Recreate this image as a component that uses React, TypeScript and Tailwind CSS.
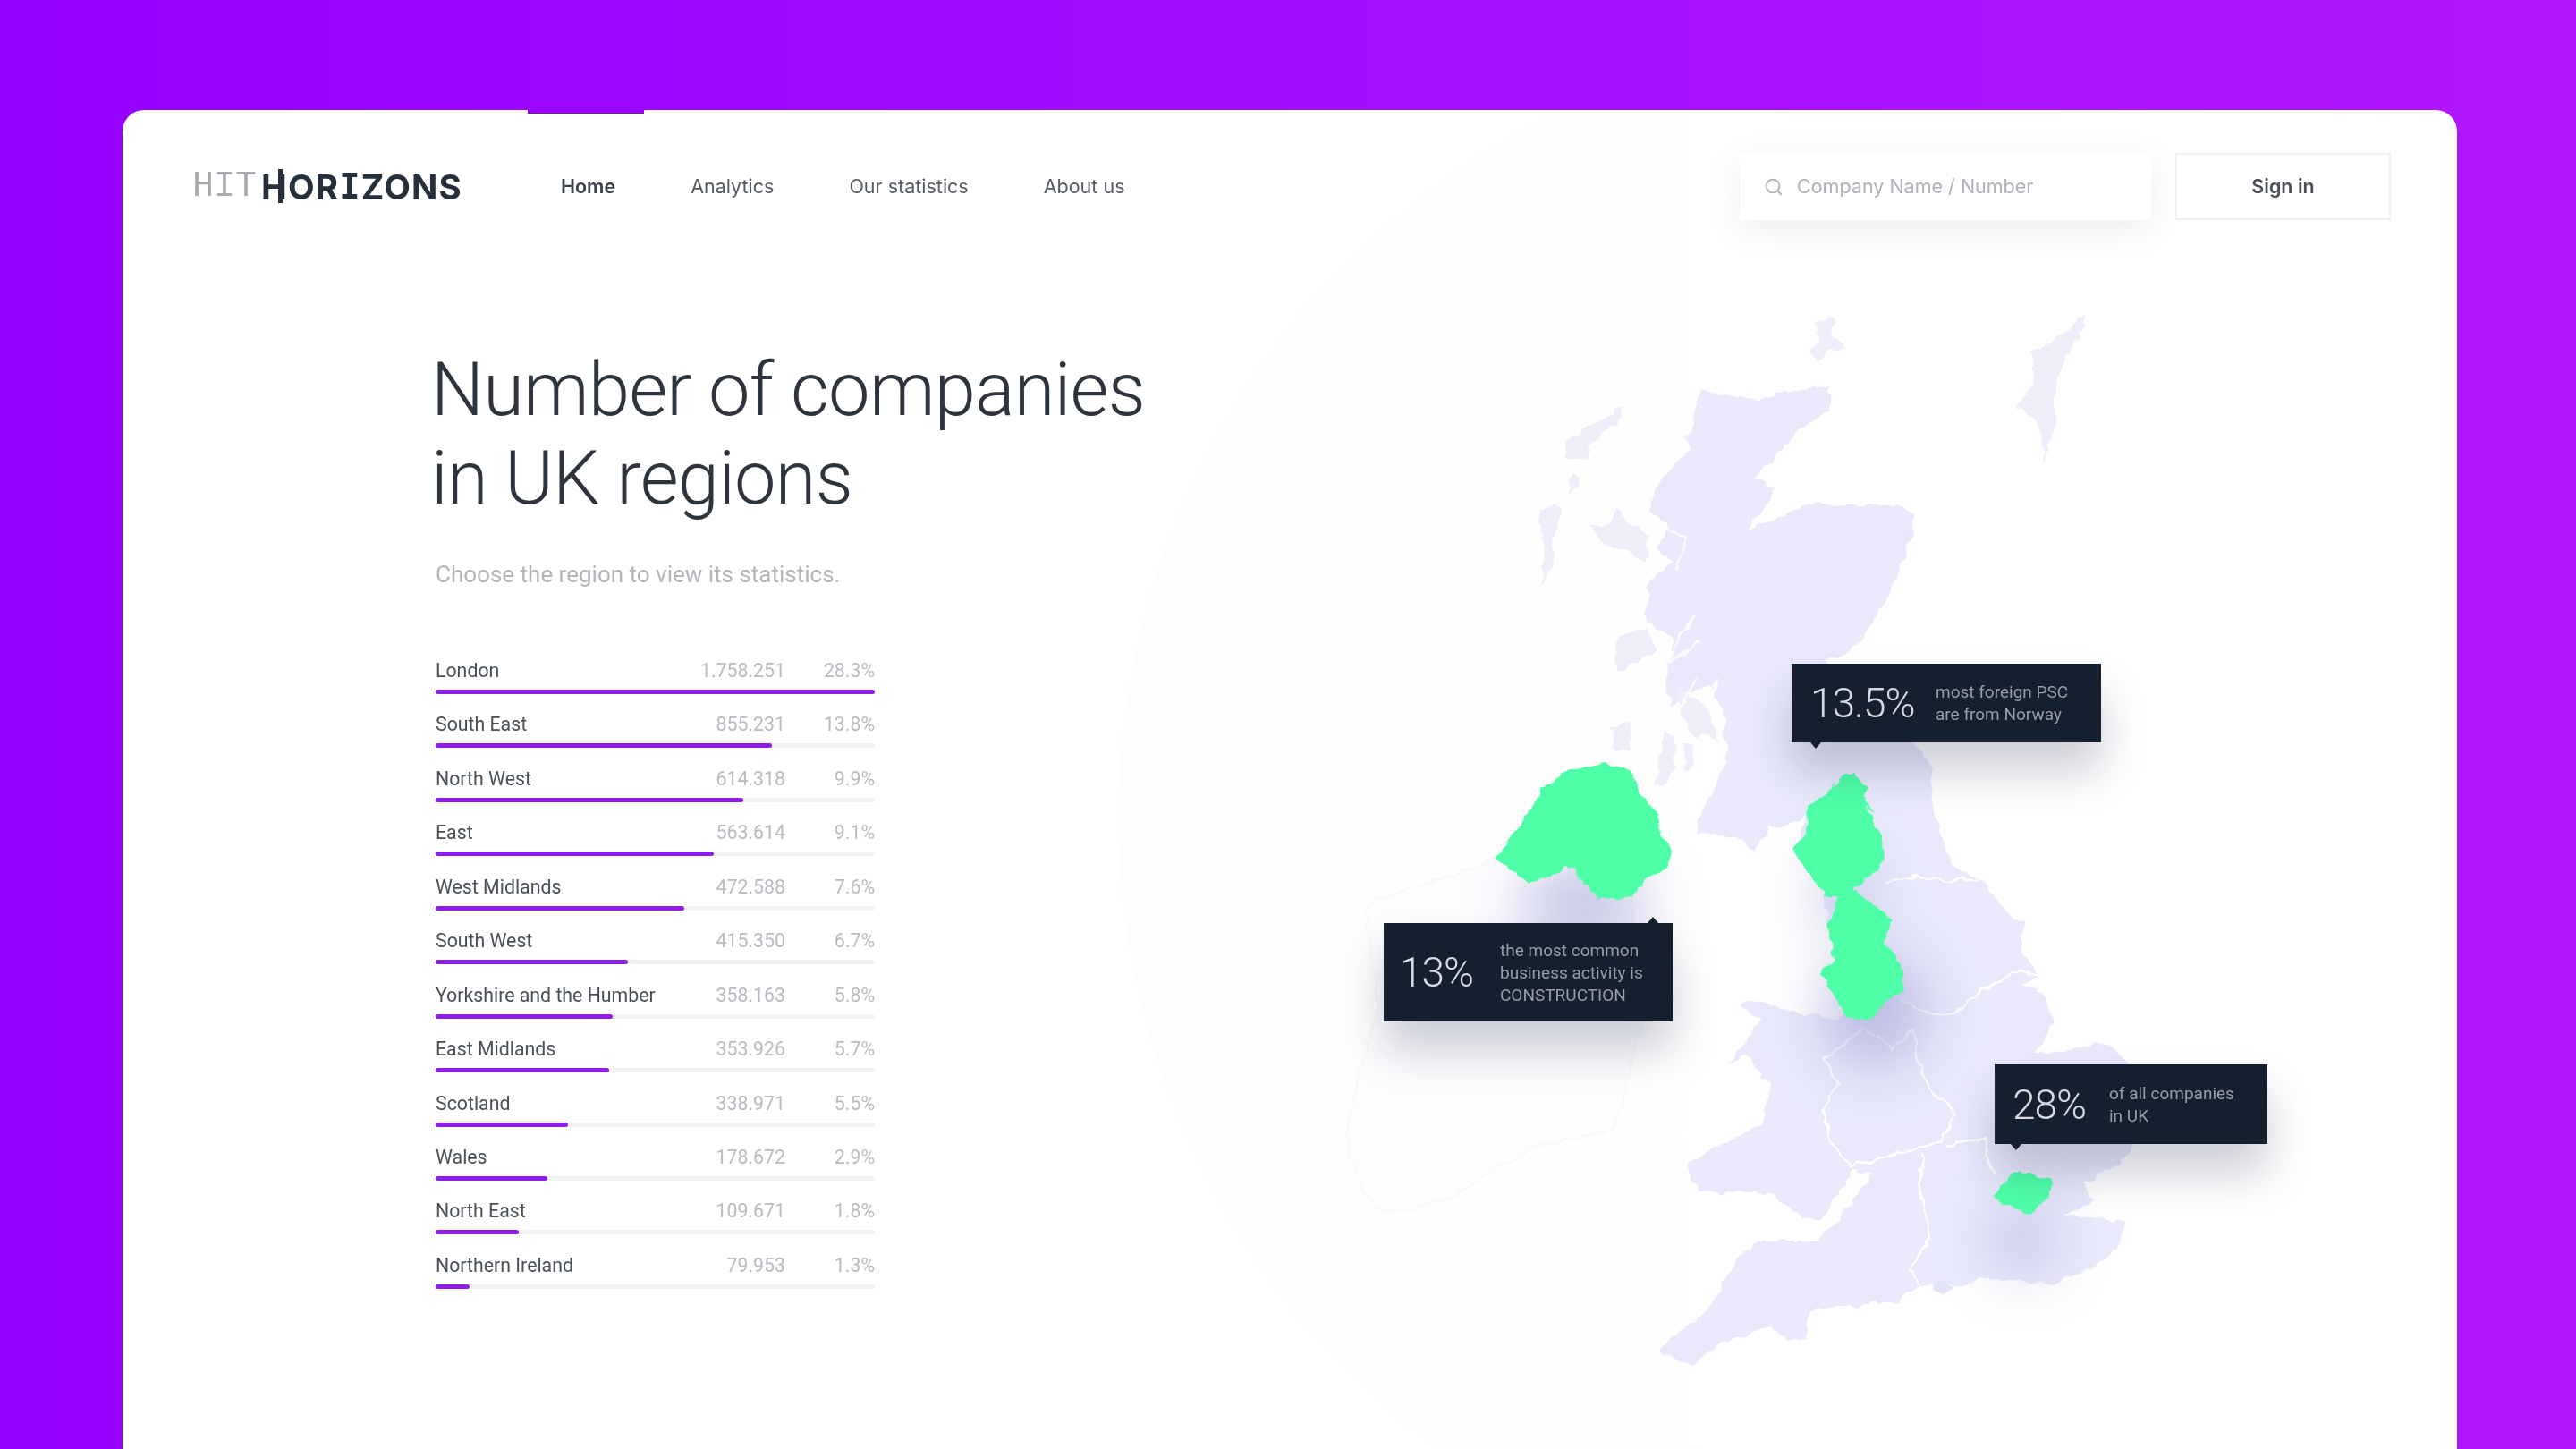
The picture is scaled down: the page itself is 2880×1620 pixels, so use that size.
import { Search } from 'lucide-react';

const regions = [
  { name: 'London', count: '1.758.251', pct: '28.3%', bar: 100 },
  { name: 'South East', count: '855.231', pct: '13.8%', bar: 76.5 },
  { name: 'North West', count: '614.318', pct: '9.9%', bar: 70 },
  { name: 'East', count: '563.614', pct: '9.1%', bar: 63.4 },
  { name: 'West Midlands', count: '472.588', pct: '7.6%', bar: 56.7 },
  { name: 'South West', count: '415.350', pct: '6.7%', bar: 43.7 },
  { name: 'Yorkshire and the Humber', count: '358.163', pct: '5.8%', bar: 40.3 },
  { name: 'East Midlands', count: '353.926', pct: '5.7%', bar: 39.5 },
  { name: 'Scotland', count: '338.971', pct: '5.5%', bar: 30.2 },
  { name: 'Wales', count: '178.672', pct: '2.9%', bar: 25.4 },
  { name: 'North East', count: '109.671', pct: '1.8%', bar: 19 },
  { name: 'Northern Ireland', count: '79.953', pct: '1.3%', bar: 7.8 },
];

// map coordinates are page pixels, the svg viewBox starts at the card corner
const mainland =
  '1900,436 1935,442 1954,448 1998,438 2046,432 2046,458 2005,486 1979,517 1960,537 1986,545 1979,561 1951,593 1998,573 2030,561 2062,565 2120,565 2139,573 2139,593 2123,636 2113,664 2088,703 2080,720 2040,740 2120,800 2139,832 2158,854 2160,900 2168,930 2185,969 2215,983 2238,1015 2261,1033 2261,1061 2280,1093 2262,1100 2284,1107 2296,1148 2276,1175 2315,1175 2340,1166 2361,1170 2384,1194 2392,1240 2384,1281 2368,1304 2330,1322 2341,1341 2307,1359 2376,1366 2368,1396 2338,1419 2292,1435 2215,1428 2185,1437 2143,1439 2131,1446 2123,1455 2062,1460 2024,1465 2016,1497 1997,1499 1978,1483 1924,1501 1890,1524 1856,1513 1863,1501 1909,1465 1940,1410 1970,1387 2032,1387 2055,1364 2093,1313 2070,1309 2039,1361 2016,1361 1978,1334 1940,1332 1901,1334 1886,1304 1909,1286 1970,1258 1978,1212 1955,1180 1928,1192 1947,1171 1970,1139 1945,1125 1955,1118 2001,1130 2055,1139 2062,1134 2051,1111 2035,1088 2051,1070 2043,1033 2039,1001 2005,950 2012,930 2020,914 1978,927 1960,950 1947,937 1909,932 1897,933 1900,913 1913,893 1930,853 1927,797 1913,767 1893,772 1870,790 1862,770 1865,739 1872,715 1850,700 1838,690 1845,665 1839,656 1871,628 1852,616 1865,589 1845,569 1849,553 1858,533 1890,502 1884,490 1896,466';

const islands = [
  '2330,351 2333,363 2317,387 2305,407 2298,434 2298,478 2285,519 2282,490 2273,466 2255,456 2260,446 2273,430 2273,395 2305,375',
  '2027,359 2053,355 2049,375 2065,389 2043,393 2033,405 2024,395 2034,379',
  '1814,454 1807,474 1775,498 1775,513 1750,513 1750,494 1782,474',
  '1769,537 1753,553 1758,530',
  '1807,565 1823,585 1845,600 1839,628 1820,616 1794,608 1778,589 1801,585',
  '1721,569 1747,567 1737,600 1734,636 1724,656 1727,608',
  '1810,712 1840,705 1853,728 1830,740 1808,750 1805,735',
  '1800,812 1822,807 1823,835 1808,840',
  '1862,818 1873,820 1872,860 1862,878 1850,875',
  '1882,832 1892,835 1894,858 1884,860',
  '1875,770 1895,780 1915,800 1920,830 1905,820 1895,825 1880,800',
];

const ireland =
  '1542,1006 1626,978 1672,960 1710,987 1787,1006 1825,1001 1833,1148 1825,1185 1806,1263 1718,1281 1618,1341 1549,1357 1527,1336 1504,1272 1520,1200 1540,1130 1527,1015';

const northernIreland =
  '1672,960 1695,928 1710,909 1724,881 1756,861 1794,854 1823,861 1833,885 1852,909 1856,928 1867,950 1863,973 1840,983 1825,1001 1787,1006 1752,964 1745,976 1710,987 1695,975';
const yorkshireNorthWest =
  '2072,863 2088,881 2083,893 2097,909 2085,900 2100,928 2108,950 2100,973 2070,996 2093,1010 2116,1029 2108,1052 2127,1079 2127,1107 2085,1141 2062,1134 2051,1111 2035,1088 2051,1070 2043,1033 2055,1001 2039,1001 2005,950 2020,923 2021,901 2040,889 2062,865';
const londonArea = '2231,1336 2246,1316 2265,1309 2292,1320 2288,1341 2269,1359 2238,1348';

const borders = [
  '2104,987 2139,980 2180,985 2215,983',
  '2123,1116 2154,1134 2185,1134 2215,1107 2261,1084 2280,1093',
  '2085,1148 2116,1172 2139,1150 2143,1185 2154,1212 2185,1244 2170,1276 2100,1295 2070,1304 2046,1276 2039,1240 2055,1212 2039,1185 2085,1148',
  '2150,1290 2146,1332 2158,1382 2135,1419 2146,1437',
  '2177,1281 2223,1272 2223,1299 2231,1313',
  '2093,1313 2070,1309',
];

const lochs = [
  '1900,717 1880,733 1865,739',
  '1897,757 1877,797 1877,815',
  '1896,687 1880,710 1865,739',
  '1860,590 1885,600 1875,640',
  '1920,760 1908,790 1925,815',
];

function Tooltip({ value, lines, numberClass, className, arrowClass }: {
  value: string; lines: string[]; numberClass: string; className: string; arrowClass: string;
}) {
  return (
    <div className={`absolute flex items-center bg-[#14202e] shadow-[0_32px_50px_rgba(25,30,70,0.22)] ${className}`}>
      <span className={`font-light text-[46px] tracking-[-1px] leading-none text-[#d5d9dd] ${numberClass}`}>{value}</span>
      <div className="text-[19px] leading-[25px] text-[#969da6]">
        {lines.map((l) => <div key={l}>{l}</div>)}
      </div>
      <div className={`absolute w-0 h-0 border-x-[6px] border-x-transparent ${arrowClass}`} />
    </div>
  );
}

function UkMap() {
  return (
    <svg className="absolute left-0 top-0 w-[2610px] h-[1497px]" viewBox="137 123 2610 1497" fill="none">
      <defs>
        <filter id="soft" x="-60%" y="-60%" width="220%" height="220%">
          <feGaussianBlur stdDeviation="34" />
        </filter>
        {/* rough coastline */}
        <filter id="coast" x="-5%" y="-5%" width="110%" height="110%">
          <feTurbulence type="fractalNoise" baseFrequency="0.07" numOctaves="2" seed="4" />
          <feDisplacementMap in="SourceGraphic" scale="11" xChannelSelector="R" yChannelSelector="G" />
          <feGaussianBlur stdDeviation="0.7" />
        </filter>
      </defs>
      <g filter="url(#coast)">
        <polygon points={ireland} fill="#fdfdff" stroke="#f8f8fc" strokeWidth="2" />
        <polygon points={mainland} fill="#e9e9fb" />
        {islands.map((p) => <polygon key={p} points={p} fill="#eeeefb" />)}
        {lochs.map((p) => <polyline key={p} points={p} stroke="#ffffff" strokeWidth="3" opacity="0.8" />)}
        {borders.map((p) => <polyline key={p} points={p} stroke="#ffffff" strokeWidth="2.5" />)}
        <polygon points="2160,1440 2170,1432 2184,1440 2172,1450" fill="#e4e4f8" />
      </g>
      <g fill="#a0a0d4" opacity="0.7" filter="url(#soft)">
        <ellipse cx="1770" cy="1010" rx="70" ry="42" />
        <ellipse cx="2060" cy="1000" rx="22" ry="50" />
        <ellipse cx="2095" cy="1130" rx="55" ry="60" />
        <ellipse cx="2262" cy="1385" rx="30" ry="36" />
      </g>
      <g filter="url(#coast)" fill="#50ffa8">
        <polygon points={northernIreland} />
        <polygon points={yorkshireNorthWest} />
        <polygon points={londonArea} />
      </g>
    </svg>
  );
}

export default function App() {
  return (
    <div className="h-[1620px] overflow-hidden bg-gradient-to-r from-[#9500ff] to-[#b215ff] pt-[123px] pl-[137px] pr-[133px] font-['Roboto',sans-serif]">
      <div className="relative h-[1497px] overflow-hidden rounded-t-[24px] bg-white blur-[0.5px]">
        <div className="absolute left-[1113px] top-[-90px] w-[1760px] h-[1760px] rounded-full bg-gradient-to-r from-[#fdfdfd] to-white to-40%" />
        <div className="absolute left-[453px] top-0 w-[130px] h-[4px] bg-[#9a00ff]" />
        <UkMap />

        <header className="relative flex items-center pt-[48px] pl-[78px] pr-[74px]">
          <div className="relative flex w-[300px] items-center text-[38.5px] leading-[44px]">
            <span className="font-['Liberation_Mono',monospace] text-[40px] text-[#a8abb0]">HIT</span>
            <span className="ml-[5px] flex font-['Inter',sans-serif] font-bold tracking-[1.2px] text-[#25303c]">
              HOR<span className="font-['DejaVu_Sans_Mono',monospace]">I</span>ZONS
            </span>
            <div className="absolute left-[96px] top-[2px] h-[38px] w-[5px] bg-[#25303c]" />
          </div>
          <nav className="ml-[112px] flex gap-[84px] font-['Inter',sans-serif] text-[21.5px] text-[#555b63]">
            <a className="font-semibold text-[#3a4048]">Home</a>
            <a>Analytics</a>
            <a>Our statistics</a>
            <a>About us</a>
          </nav>
          <div className="ml-auto flex gap-[27px] font-['Inter',sans-serif] text-[21.5px]">
            <div className="flex h-[75px] w-[460px] items-center gap-[15px] bg-white pl-[27px] text-[#aeb1b8] shadow-[0_10px_40px_rgba(0,0,0,0.08)]">
              <Search className="h-[22px] w-[22px]" strokeWidth={2} />
              <span>Company Name / Number</span>
            </div>
            <button className="h-[75px] w-[241px] border-2 border-[#f1f1f1] bg-white font-semibold text-[#4a4f56]">Sign in</button>
          </div>
        </header>

        <main className="relative ml-[350px] mt-[140px] w-[491px]">
          <h1 className="-ml-[5px] w-[900px] text-[83px] font-light leading-[99px] tracking-[-0.75px] text-[#2e343c]">
            Number of companies<br />in UK regions
          </h1>
          <p className="mt-[43px] text-[26px] leading-[30px] text-[#b3b5ba]">Choose the region to view its statistics.</p>
          <ul className="mt-[79px]">
            {regions.map((r) => (
              <li key={r.name} className="h-[60.45px]">
                <div className="flex h-[28px] items-center text-[21.3px]">
                  <span className="text-[#4a5058]">{r.name}</span>
                  <span className="ml-auto text-[#b8bbc1]">{r.count}</span>
                  <span className="w-[100px] text-right text-[#b8bbc1]">{r.pct}</span>
                </div>
                <div className="mt-[7px] h-[5px] rounded-full bg-[#f3f3f6]">
                  <div className="h-full rounded-full bg-[#8f1fe8]" style={{ width: `${r.bar}%` }} />
                </div>
              </li>
            ))}
          </ul>
        </main>

        <Tooltip
          value="13.5%"
          lines={['most foreign PSC', 'are from Norway']}
          numberClass="w-[140px]"
          className="left-[1866px] top-[619px] h-[88px] w-[346px] pl-[21px]"
          arrowClass="left-[21px] top-full border-t-[7px] border-t-[#14202e]"
        />
        <Tooltip
          value="13%"
          lines={['the most common', 'business activity is', 'CONSTRUCTION']}
          numberClass="w-[112px]"
          className="left-[1410px] top-[909px] h-[110px] w-[323px] pl-[18px]"
          arrowClass="left-[295px] bottom-full border-b-[7px] border-b-[#14202e]"
        />
        <Tooltip
          value="28%"
          lines={['of all companies', 'in UK']}
          numberClass="w-[108px]"
          className="left-[2093px] top-[1067px] h-[89px] w-[305px] pl-[20px]"
          arrowClass="left-[18px] top-full border-t-[7px] border-t-[#14202e]"
        />
      </div>
    </div>
  );
}
